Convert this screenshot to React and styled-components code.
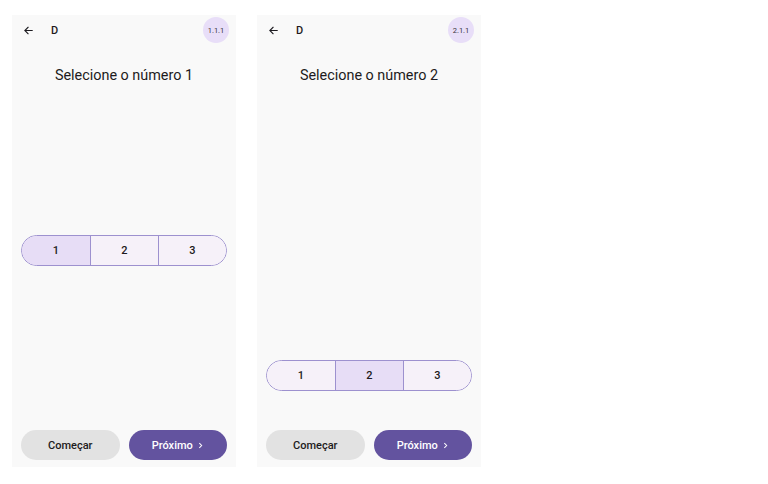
import React from "react";
import styled, { createGlobalStyle } from "styled-components";

const Global = createGlobalStyle`
  html, body { margin: 0; padding: 0; background: #ffffff; }
  body { font-family: Roboto, "Noto Sans", sans-serif; color: #1d1b20; }
`;

const Page = styled.div`
  display: flex;
  gap: 21px;
  padding: 15px 0 0 12px;
`;

const Screen = styled.div`
  width: 224px;
  height: 452px;
  background: #f9f9f9;
  display: flex;
  flex-direction: column;
  box-sizing: border-box;
`;

const Header = styled.div`
  height: 30px;
  display: flex;
  align-items: center;
  padding: 0 7px 0 10px;
`;

const BackButton = styled.div`
  width: 12px;
  height: 12px;
  display: flex;
  align-items: center;
  justify-content: center;
  color: #1d1b20;
`;

const HeaderTitle = styled.span`
  margin-left: 17px;
  font-size: 11px;
  font-weight: 500;
  flex: 1;
`;

const Badge = styled.div`
  width: 26px;
  height: 26px;
  border-radius: 50%;
  background: #e8def8;
  display: flex;
  align-items: center;
  justify-content: center;
  font-size: 7.5px;
  color: #3a3640;
`;

const Title = styled.h1`
  margin: 21px 0 0;
  font-size: 14.4px;
  line-height: 20px;
  font-weight: 400;
  text-align: center;
  color: #1d1b20;
`;

const Body = styled.div`
  flex: 1;
  padding: ${(p) => p.$offset}px 9px 0;
`;

const Segmented = styled.div`
  display: grid;
  grid-template-columns: repeat(3, 1fr);
  height: 31px;
  border: 1px solid #9d91cf;
  border-radius: 16px;
  overflow: hidden;
  box-sizing: border-box;
`;

const Segment = styled.div`
  display: flex;
  align-items: center;
  justify-content: center;
  font-size: 11px;
  font-weight: 500;
  color: #1d1b20;
  background: ${(p) => (p.$selected ? "#e7ddf6" : "#f6f1f9")};
  & + & {
    border-left: 1px solid #9d91cf;
  }
`;

const Footer = styled.div`
  display: flex;
  gap: 9px;
  padding: 0 9px 7px;
`;

const Button = styled.button`
  flex: 1;
  height: 30px;
  border: none;
  border-radius: 15px;
  font-family: Roboto, "Noto Sans", sans-serif;
  font-size: 11px;
  font-weight: 500;
  display: flex;
  align-items: center;
  justify-content: center;
  gap: 4px;
  background: ${(p) => (p.$primary ? "#63539f" : "#e2e2e2")};
  color: ${(p) => (p.$primary ? "#ffffff" : "#1d1b20")};
`;

const ArrowLeft = () => (
  <svg width="11" height="11" viewBox="0 0 24 24" fill="none" stroke="currentColor" strokeWidth="2.4" strokeLinecap="square">
    <path d="M20 12H5M11 5l-7 7 7 7" />
  </svg>
);

const Chevron = () => (
  <svg width="7" height="7" viewBox="0 0 24 24" fill="none" stroke="currentColor" strokeWidth="3.5">
    <path d="M8 4l8 8-8 8" />
  </svg>
);

const screens = [
  { n: 1, badge: "1.1.1", offset: 149 },
  { n: 2, badge: "2.1.1", offset: 274 },
];

export default function App() {
  return (
    <>
      <Global />
      <Page>
        {screens.map((s) => (
          <Screen key={s.n}>
            <Header>
              <BackButton>
                <ArrowLeft />
              </BackButton>
              <HeaderTitle>D</HeaderTitle>
              <Badge>{s.badge}</Badge>
            </Header>
            <Title>Selecione o número {s.n}</Title>
            <Body $offset={s.offset}>
              <Segmented>
                {[1, 2, 3].map((v) => (
                  <Segment key={v} $selected={v === s.n}>
                    {v}
                  </Segment>
                ))}
              </Segmented>
            </Body>
            <Footer>
              <Button>Começar</Button>
              <Button $primary>
                Próximo <Chevron />
              </Button>
            </Footer>
          </Screen>
        ))}
      </Page>
    </>
  );
}
